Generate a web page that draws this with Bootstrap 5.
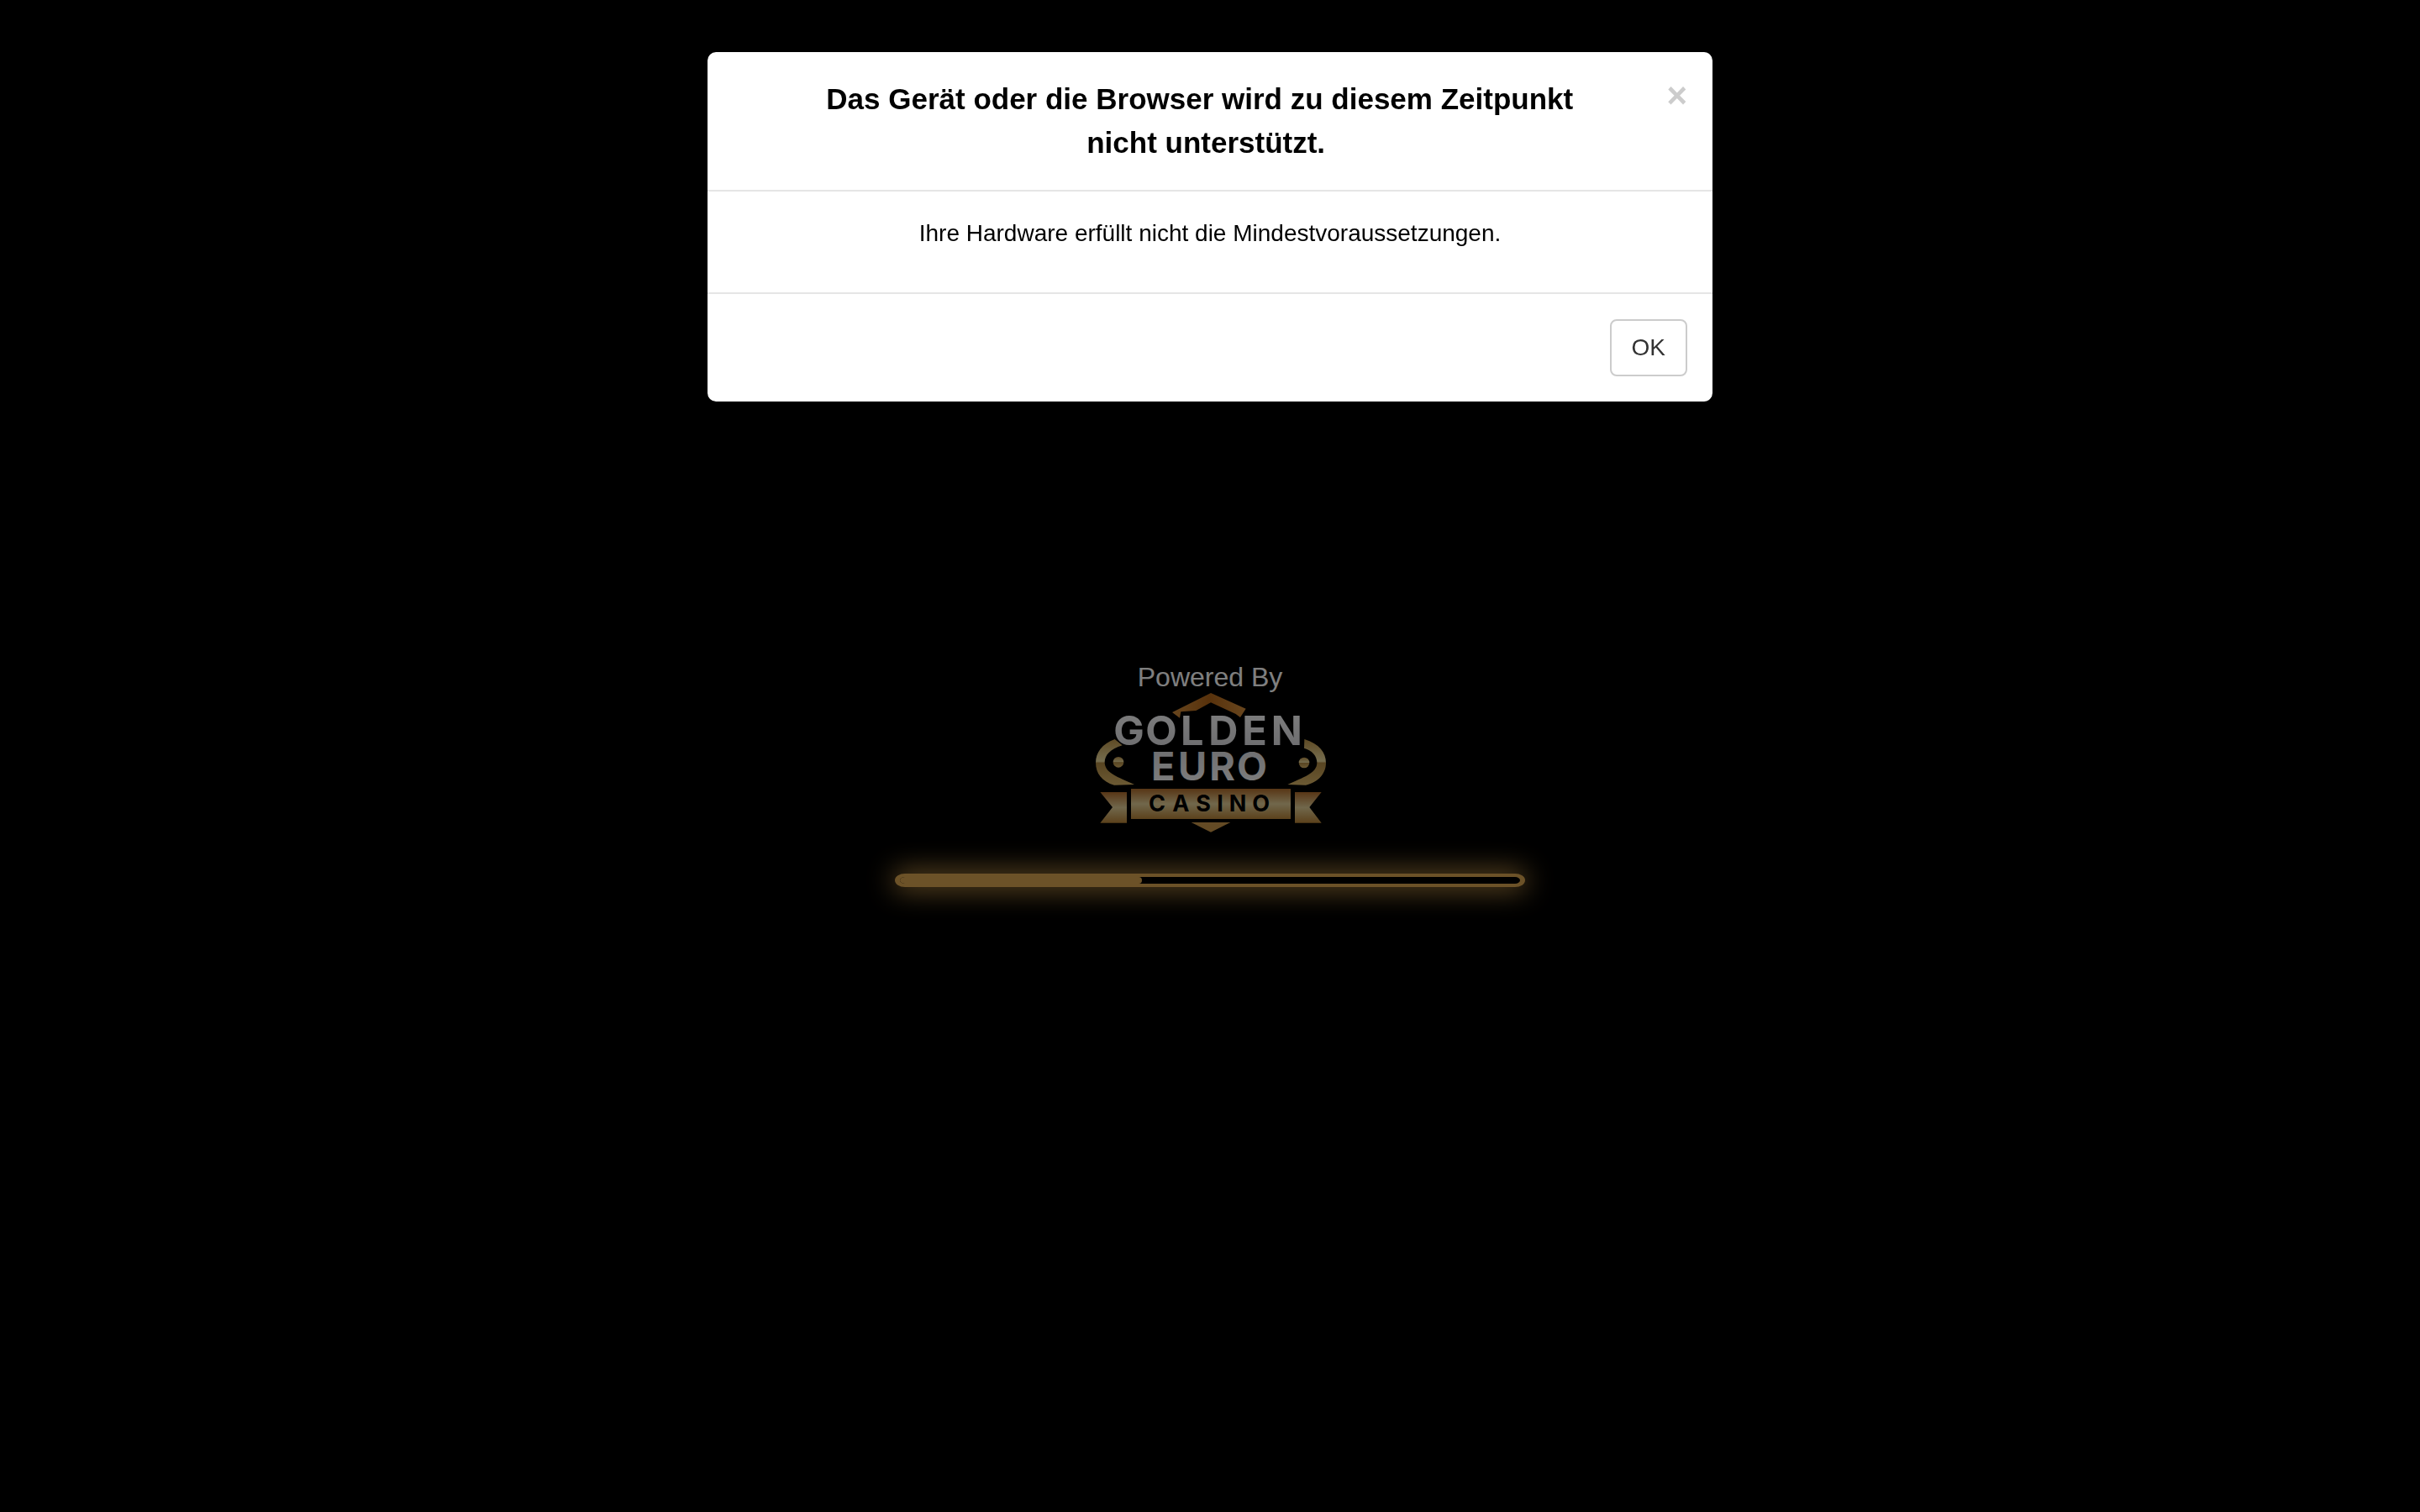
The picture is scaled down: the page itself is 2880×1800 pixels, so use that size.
<!DOCTYPE html>
<html lang="de">
<head>
<meta charset="utf-8">
<meta name="viewport" content="width=device-width, initial-scale=1">
<title>Golden Euro Casino</title>
<link href="https://cdn.jsdelivr.net/npm/bootstrap@5.3.0/dist/css/bootstrap.min.css" rel="stylesheet">
<style>
  body { background: #000; color: #000; font-family: "Liberation Sans", Arial, sans-serif; font-size: 28px; line-height: 40px; }

  /* Loading screen */
  .loader-stage { padding-top: 44px; }
  .powered-by { font-size: 32px; line-height: 36px; color: #fff; }
  .brand-logo { width: 280px; height: auto; }
  .brand-logo text { font-family: Inter, Lato, sans-serif; font-weight: 700; }
  .load-track {
    width: 750px; max-width: 90%; height: 16px; margin-top: 48px;
    background: #000; border: solid #d8a450; border-width: 4px 6px; border-radius: 12px / 8px;
    box-shadow: 0 0 32px 3px #d8a450; overflow: hidden;
  }
  .load-track .progress-bar { background: #d8a450; border-radius: 0 4px 4px 0; }

  /* Dialog */
  .notice .modal-dialog { max-width: 1200px; margin: 60px auto; }
  .notice .modal-content { color: #000; background-clip: padding-box; border: 2px solid rgba(0, 0, 0, .2); border-radius: 12px; }
  .notice .modal-header { padding: 30px; border-bottom: 2px solid #e5e5e5; }
  .notice .modal-title { font-size: 35px; font-weight: 700; line-height: 52px; }
  .notice .modal-body { padding: 30px; }
  .notice .modal-body p { margin-bottom: 20px; }
  .notice .modal-footer { padding: 30px; border-top: 2px solid #e5e5e5; }
  .notice .modal-footer > * { margin: 0; }
  .dismiss { padding: 0; border: 0; background: none; color: #ccc; font-size: 42px; font-weight: 700; line-height: 44px; }
  .confirm { --bs-btn-font-size: 28px; --bs-btn-line-height: 40px; --bs-btn-padding-x: 24px; --bs-btn-padding-y: 12px; --bs-btn-border-width: 2px; --bs-btn-border-radius: 8px; --bs-btn-color: #333; --bs-btn-bg: #fff; --bs-btn-border-color: #ccc; }
</style>
</head>
<body>

<main class="loader-stage min-vh-100 d-flex flex-column align-items-center justify-content-center">
  <div class="powered-by">Powered By</div>
  <svg class="brand-logo" viewBox="60 160 840 504" role="img" aria-label="Golden Euro Casino">
    <defs>
      <linearGradient id="ribbon" x1="0" y1="0" x2="0" y2="1">
        <stop offset="0" stop-color="#b06c2c"/>
        <stop offset=".5" stop-color="#e2cf98"/>
        <stop offset="1" stop-color="#b88438"/>
      </linearGradient>
      <linearGradient id="ring" x1="0" y1="0" x2="0" y2="1">
        <stop offset="0" stop-color="#bc9448"/>
        <stop offset=".48" stop-color="#ecdca0"/>
        <stop offset=".52" stop-color="#b08a44"/>
        <stop offset="1" stop-color="#d8b468"/>
      </linearGradient>
      <linearGradient id="roof" x1="0" y1="0" x2="1" y2="0">
        <stop offset="0" stop-color="#d08c3c"/>
        <stop offset=".5" stop-color="#b06418"/>
        <stop offset="1" stop-color="#d08c3c"/>
      </linearGradient>
      <linearGradient id="silver" x1="0" y1="0" x2="0" y2="1">
        <stop offset="0" stop-color="#ffffff"/>
        <stop offset=".5" stop-color="#dcdce0"/>
        <stop offset="1" stop-color="#ffffff"/>
      </linearGradient>
    </defs>
    <path fill="url(#roof)" d="M345 232 483 163 608 219 588 250 572 238 483 197 430 226 376 230 372 252Z"/>
    <path fill="url(#ring)" d="M140 328C95 345 72 375 72 412C72 450 95 480 138 492L210 490C150 462 104 450 104 410C104 385 125 362 167 350Z"/>
    <path fill="url(#ring)" d="M817 328C870 345 894 375 894 412C894 450 868 482 822 492L757 490C812 464 862 450 862 412C862 388 845 368 816 360Z"/>
    <circle fill="url(#ring)" cx="153" cy="410" r="19"/>
    <circle fill="url(#ring)" cx="816" cy="412" r="19"/>
    <path fill="url(#ribbon)" d="M88 517H183V627H88L132 571ZM783 517H878L835 571 878 627H783Z"/>
    <path fill="url(#ribbon)" d="M198 505H768V613H198Z"/>
    <path fill="#c8964a" d="M413 625H553L483 660Z"/>
    <text fill="url(#silver)"><tspan font-size="146" y="348" x="136 250 375 475 595 698">GOLDEN</tspan><tspan font-size="140" y="475" x="270 366 478 576">EURO</tspan></text>
    <text fill="#000" font-size="81" y="587" x="261 346 430 505 548 631">CASINO</text>
  </svg>
  <div class="load-track progress" role="progressbar" aria-label="Laden" aria-valuenow="40" aria-valuemin="0" aria-valuemax="100">
    <div class="progress-bar" style="width: 39%"></div>
  </div>
</main>

<div class="modal-backdrop show"></div>
<div class="notice modal d-block" role="dialog" aria-modal="true" aria-labelledby="noticeTitle">
  <div class="modal-dialog">
    <div class="modal-content">
      <div class="modal-header d-block text-center">
        <button type="button" class="dismiss float-end" aria-label="Schließen">×</button>
        <h4 class="modal-title" id="noticeTitle">Das Gerät oder die Browser wird zu diesem Zeitpunkt<br>nicht unterstützt.&nbsp;</h4>
      </div>
      <div class="modal-body text-center">
        <p>Ihre Hardware erfüllt nicht die Mindestvoraussetzungen.</p>
      </div>
      <div class="modal-footer">
        <button type="button" class="btn confirm">OK</button>
      </div>
    </div>
  </div>
</div>

<script src="https://cdn.jsdelivr.net/npm/bootstrap@5.3.0/dist/js/bootstrap.bundle.min.js"></script>
</body>
</html>
